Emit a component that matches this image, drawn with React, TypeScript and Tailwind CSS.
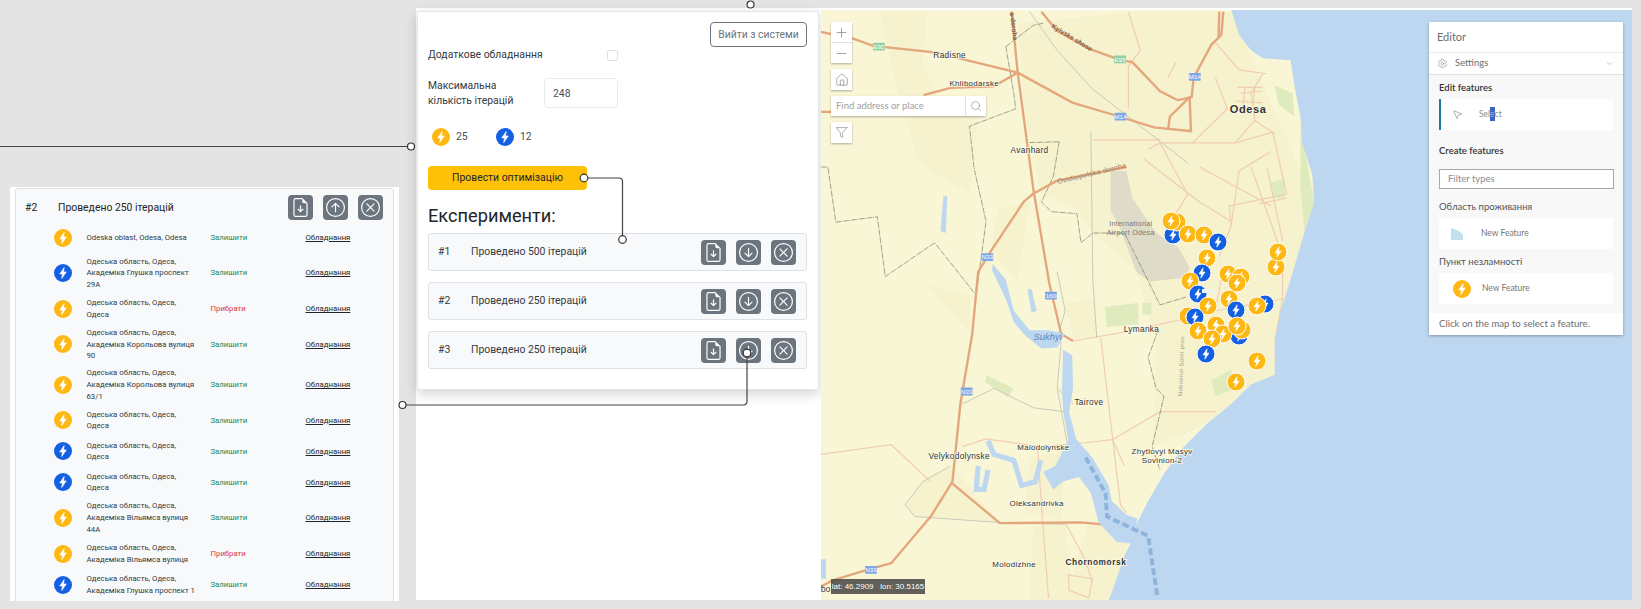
import { Home, Minus, MousePointer2, Plus, Search, Settings, ChevronDown } from "lucide-react";
import { BsArrowDownCircle, BsArrowUpCircle, BsFileEarmarkArrowDown, BsXCircle } from "react-icons/bs";
import { LuFilter } from "react-icons/lu";

const YELLOW = "#fdb813";
const BLUE = "#1460e2";
const BOLT = "M13.6 4.6 L7.6 13.3 H11.2 L10.3 19.4 L16.4 10.6 H12.7 Z";

type Kind = "y" | "b";

const points: { kind: Kind; lines: string[]; remove?: boolean }[] = [
  { kind: "y", lines: ["Odeska oblast, Odesa, Odesa"] },
  { kind: "b", lines: ["Одеська область, Одеса,", "Академіка Глушка проспект", "29А"] },
  { kind: "y", lines: ["Одеська область, Одеса,", "Одеса"], remove: true },
  { kind: "y", lines: ["Одеська область, Одеса,", "Академіка Корольова вулиця", "90"] },
  { kind: "y", lines: ["Одеська область, Одеса,", "Академіка Корольова вулиця", "63/1"] },
  { kind: "y", lines: ["Одеська область, Одеса,", "Одеса"] },
  { kind: "b", lines: ["Одеська область, Одеса,", "Одеса"] },
  { kind: "b", lines: ["Одеська область, Одеса,", "Одеса"] },
  { kind: "y", lines: ["Одеська область, Одеса,", "Академіка Вільямса вулиця", "44А"] },
  { kind: "y", lines: ["Одеська область, Одеса,", "Академіка Вільямса вулиця"], remove: true },
  { kind: "b", lines: ["Одеська область, Одеса,", "Академіка Глушка проспект 1"] },
];

const experiments = [
  { id: 1, text: "Проведено 500 ітерацій" },
  { id: 2, text: "Проведено 250 ітерацій" },
  { id: 3, text: "Проведено 250 ітерацій" },
];

// marker positions, page px, back to front
const markers: [Kind, number, number][] = [
  ["b", 1173, 235], ["y", 1177, 222], ["y", 1171, 221], ["y", 1188, 234], ["y", 1204, 235],
  ["b", 1218, 242], ["y", 1207, 258], ["b", 1202, 273], ["y", 1190, 281], ["y", 1228, 274],
  ["y", 1241, 277], ["y", 1237, 283], ["y", 1276, 267], ["y", 1278, 252], ["b", 1198, 294],
  ["y", 1208, 306], ["y", 1229, 299], ["b", 1236, 310], ["b", 1265, 304], ["y", 1257, 306],
  ["y", 1188, 316], ["b", 1195, 317], ["b", 1239, 336], ["y", 1216, 325], ["y", 1223, 334],
  ["y", 1242, 330], ["y", 1237, 326], ["y", 1198, 331], ["y", 1212, 339], ["b", 1206, 354],
  ["y", 1257, 361], ["y", 1236, 382],
];

const mainRoads = [
  "M0,82 L80,98 L135,118 L290,135 L500,187 L640,265 L750,298 L845,328 L940,338",
  "M0,288 L28,288",
  "M262,245 L330,226 L440,222 L500,187",
  "M485,30 L500,187 L540,490 L580,730 L610,860 L640,878",
  "M560,30 L600,80 L680,125 L760,155 L790,160 L860,235 L905,258 L940,250 L945,200 L990,115 L1015,90 L1020,30",
  "M1010,30 L1008,95",
  "M880,335 L885,300 L935,250 L938,338",
  "M775,430 L600,465 L540,498 L515,520 L430,650 L400,700 L385,860 L355,1040 L335,1240 L280,1330 L180,1450 L110,1470 L30,1495 L0,1512",
  "M335,1245 L455,1347 L660,1345 L715,1350",
];

const minorRoads = [
  "M640,878 L770,855 L925,820 L1000,800 L1170,770 L1170,700",
  "M360,1150 L420,1130 L560,1150 L670,1140 L740,1132",
  "M710,870 L760,1300 L775,1320",
  "M550,1150 L560,1300 L578,1540",
  "M620,1345 L670,1440 L690,1500",
  "M628,1480 L688,1490 L680,1540 L630,1520 Z",
  "M830,385 L860,368 L1050,368 L1145,340 L1180,500 L1035,530 L1040,580",
  "M860,368 L930,500 L900,550",
  "M1090,430 L1160,630",
  "M1140,390 L1060,440 L1040,580 L1010,660",
  "M1050,368 L1100,310 L1090,240 L1120,190",
  "M1000,110 L1060,180 L1130,190",
  "M1030,280 L940,370",
  "M820,410 L960,520 L1040,570",
  "M1180,510 L1110,525",
  "M780,30 L810,130 L780,170 L780,280",
  "M690,360 L860,360",
  "M1000,800 L1020,690",
  "M1170,770 L1150,880",
  "M770,1200 L740,1132 L860,1060 L1000,1060",
  "M0,1170 L180,1145 L280,1240",
  "M640,1040 L600,1000",
  "M1060,240 L1120,235 M1050,260 L1120,265 M1100,310 L1150,345 M960,430 L1140,530",
  "M1055,225 L1120,225 M1075,225 L1070,270 M1100,225 L1095,270 M900,160 L880,200 M1000,200 L1030,280 M1130,430 L1170,620",
];

const rail = [
  "M530,30 L600,130 L690,230 L830,340 L930,420",
  "M685,340 L690,720 L700,870",
  "M600,870 L620,800 L600,700",
  "M610,880 L600,1000 L625,1140",
  "M360,1040 L440,1000 L540,1050 L620,1060",
  "M215,1300 L260,1240 L330,1200 M215,1300 L240,1330 L450,1345 L620,1350",
];

const borders = [
  "M470,120 L540,65 L565,60 M470,120 L490,240 L495,280 L378,325 L390,435 L420,570 L395,760 L390,800",
  "M3,430 L20,430 L40,572 L145,558 L165,712 L290,625 L395,760",
  "M605,365 L590,455 L560,520 L585,545 L650,550 L660,625 L690,600 L770,600 L860,785 L925,765",
  "M530,367 L605,365",
  "M855,850 L830,920 L850,1000 L870,1020 L840,1150 L860,1210",
];

function BoltPath() {
  return <path d={BOLT} fill="#fff" stroke="#fff" strokeWidth={0.8} strokeLinejoin="round" />;
}

function PointIcon({ kind }: { kind: Kind }) {
  return (
    <svg viewBox="0 0 24 24" className="h-[18px] w-[18px] shrink-0">
      <circle cx={12} cy={12} r={12} fill={kind === "y" ? YELLOW : BLUE} />
      <BoltPath />
    </svg>
  );
}

function ActionButtons({ up }: { up?: boolean }) {
  return (
    <div className="flex gap-[10px]">
      <button className="flex h-[25px] w-[25px] items-center justify-center rounded-[4px] bg-[#6c757d] text-white">
        <BsFileEarmarkArrowDown size={19} />
      </button>
      <button className="flex h-[25px] w-[25px] items-center justify-center rounded-[4px] bg-[#6c757d] text-white">
        {up ? <BsArrowUpCircle size={19} /> : <BsArrowDownCircle size={19} />}
      </button>
      <button className="flex h-[25px] w-[25px] items-center justify-center rounded-[4px] bg-[#6c757d] text-white">
        <BsXCircle size={19} />
      </button>
    </div>
  );
}

function ResultFrame() {
  return (
    <div className="absolute left-[10px] top-[187px] h-[414px] w-[389px] overflow-hidden bg-white px-[5px] pt-px">
      <div className="h-[440px] rounded-[3px] border border-[#dee2e6] bg-[#f8f9fa]">
        <div className="flex items-center pl-[9px] pr-[10px] pt-[6px] text-[10.4px] text-[#212529]">
          <span className="w-[33px]">#2</span>
          <span>Проведено 250 ітерацій</span>
          <div className="ml-auto">
            <ActionButtons up />
          </div>
        </div>
        <div className="mt-[2px] pl-[38px]">
          {points.map((p, i) => (
            <div key={i} className="flex min-h-[31px] items-center py-[2.6px] text-[7.75px] leading-[11.7px]">
              <PointIcon kind={p.kind} />
              <div className="ml-[14.5px] w-[124px] text-[#343a40]">
                {p.lines.map((line) => (
                  <div key={line}>{line}</div>
                ))}
              </div>
              <span className={`w-[95px] ${p.remove ? "text-[#dc3545]" : "text-[#198754]"}`}>
                {p.remove ? "Прибрати" : "Залишити"}
              </span>
              <span className="text-[#212529] underline">Обладнання</span>
            </div>
          ))}
        </div>
      </div>
    </div>
  );
}

function ConfigPanel() {
  return (
    <div className="mt-[3px] ml-px mr-[2px] h-[379px] w-[402px] shrink-0 border border-[#e6e6e6] bg-white pl-[10px] pr-[11px] pt-[10px] text-[10.4px] text-[#343a40] shadow-[0_4px_12px_rgba(0,0,0,0.18)]">
      <div className="flex justify-end">
        <button className="h-[25px] w-[97px] rounded-[4px] border border-[#6c757d] text-[#6c757d]">
          Вийти з системи
        </button>
      </div>
      <div className="mt-px flex h-[14px] w-[190px] items-center justify-between">
        <span>Додаткове обладнання</span>
        <span className="h-[11px] w-[11px] rounded-[2px] border border-[#dee2e6] bg-white" />
      </div>
      <div className="mt-[16px] flex w-[190px] items-center justify-between leading-[15px]">
        <span>
          Максимальна
          <br />
          кількість ітерацій
        </span>
        <div className="flex h-[30px] w-[74px] items-center rounded-[4px] border border-[#e9ecef] bg-white pl-[8px] text-[#495057]">
          248
        </div>
      </div>
      <div className="mt-[20px] flex h-[18px] items-center pl-[4px] text-[#495057]">
        <PointIcon kind="y" />
        <span className="ml-[6px] w-[40px]">25</span>
        <PointIcon kind="b" />
        <span className="ml-[6px]">12</span>
      </div>
      <button className="mt-[20px] h-[24px] w-[159px] rounded-[4px] bg-[#ffc107] text-[#212529]">
        Провести оптимізацію
      </button>
      <h2 className="mt-[15px] text-[18.2px] leading-[22px] text-[#212529]">Експерименти:</h2>
      <div className="mt-[6px] flex flex-col gap-[11px]">
        {experiments.map((e) => (
          <div
            key={e.id}
            className="flex h-[38px] items-center rounded-[3px] border border-[#dee2e6] bg-[#f8f9fa] pl-[9px] pr-[10px]"
          >
            <span className="w-[33px]">#{e.id}</span>
            <span>{e.text}</span>
            <div className="ml-auto">
              <ActionButtons />
            </div>
          </div>
        ))}
      </div>
    </div>
  );
}

function Label({ x, y, text, bold, size = 20 }: { x: number; y: number; text: string; bold?: boolean; size?: number }) {
  return (
    <text
      x={x}
      y={y}
      textAnchor="middle"
      fontSize={size}
      fontWeight={bold ? 700 : 400}
      letterSpacing={bold ? 1.5 : 0.8}
      fill="#333"
      stroke="#fbf9e4"
      strokeWidth={4}
      paintOrder="stroke"
    >
      {text}
    </text>
  );
}

function Shield({ x, y, text, green }: { x: number; y: number; text: string; green?: boolean }) {
  return (
    <g>
      <rect x={x - 15} y={y - 10} width={30} height={20} rx={2} fill={green ? "#8fd0a0" : "#7fa6e6"} />
      <text x={x} y={y + 6} textAnchor="middle" fontSize={16} fill="#fff">
        {text}
      </text>
    </g>
  );
}

function MapDrawing() {
  return (
    <svg viewBox="0 0 811 590" className="absolute inset-0 h-full w-full font-['Liberation_Sans',sans-serif]">
      <rect width={811} height={590} fill="#f9f6d6" />
      <g transform="translate(-1 -10) scale(0.3954 0.3884)">
        {/* farmland and urban tint */}
        <g fill="#f5f2cd">
          <path d="M150,30 L270,30 L260,160 L310,280 L400,300 L380,500 L250,420 L200,250 Z" />
          <path d="M500,60 L800,30 L1040,30 L1250,520 L1150,965 L960,1100 L840,1150 L850,880 L800,700 L690,600 L650,540 L560,500 L520,300 Z" />
          <path d="M450,540 L530,520 L500,720 L430,650 Z" />
          <path d="M215,1300 L260,1240 L335,1200 L450,1345 L240,1330 Z" />
          <path d="M530,1180 L620,1160 L610,1340 L520,1320 Z" />
          <path d="M540,1340 L620,1350 L640,1545 L530,1545 Z" />
          <path d="M680,1340 L800,1350 L730,1545 L620,1545 Z" />
          <path d="M620,780 L700,770 L700,870 L640,870 Z" />
          <path d="M270,730 L380,760 L380,860 Z" />
        </g>
        <g fill="#dfebbd">
          <path d="M720,790 L805,780 L805,835 L725,842 Z" />
          <path d="M815,780 L838,780 L838,810 L815,810 Z" />
          <path d="M420,965 L490,1000 L475,1022 L418,985 Z" />
          <path d="M990,980 L1040,950 L1050,1000 L1000,1020 Z" />
          <path d="M1140,470 L1175,460 L1175,510 L1145,510 Z" />
          <path d="M1215,320 L1250,520 L1225,600 L1215,480 Z" />
          <path d="M1150,220 L1195,240 L1200,300 L1160,270 Z" />
        </g>
        <path
          d="M735,440 L775,440 L790,510 L850,600 L905,635 L935,690 L920,715 L835,725 L800,700 L760,590 L735,540 Z"
          fill="#dedbc8"
        />
        {minorRoads.map((d) => (
          <path key={d} d={d} fill="none" stroke="#f0cdb3" strokeWidth={3} />
        ))}
        {rail.map((d) => (
          <path key={d} d={d} fill="none" stroke="#c9c9ba" strokeWidth={2.5} />
        ))}
        {borders.map((d) => (
          <path key={d} d={d} fill="none" stroke="#6b6b60" strokeWidth={1.6} strokeDasharray="14 2 2 2" />
        ))}
        {mainRoads.map((d) => (
          <path key={d} d={d} fill="none" stroke="#e4a67c" strokeWidth={6} strokeLinejoin="round" />
        ))}
        {/* sea and limans */}
        <g fill="#bdd7f1">
          <path d="M1040,25 L1060,90 L1090,130 L1120,150 L1190,155 L1200,220 L1215,300 L1220,370 L1245,450 L1250,520 L1225,600 L1210,650 L1190,720 L1165,800 L1150,880 L1150,965 L1090,990 L1040,1040 L980,1090 L920,1150 L870,1220 L830,1290 L800,1350 L790,1390 L770,1430 L740,1520 L730,1545 L2060,1545 L2060,25 Z" />
          <path d="M437,680 L470,720 L490,800 L530,850 L580,850 L620,860 L600,895 L560,897 L520,865 L490,830 L470,770 L435,695 Z" />
          <path d="M615,900 L638,915 L640,1000 L630,1060 L648,1130 L690,1180 L730,1250 L738,1290 L775,1325 L802,1335 L792,1400 L750,1395 L705,1345 L685,1270 L655,1228 L615,1240 L590,1260 L565,1215 L595,1200 L628,1135 L615,1060 L612,1000 Z" />
          <path d="M312,505 L322,505 L318,600 L305,595 Z" />
          <path d="M525,745 L535,745 L548,800 L535,805 Z" />
          <path d="M0,1440 L15,1440 L15,1490 L0,1490 Z" />
        </g>
        <path
          d="M425,1135 L440,1170 L490,1185 L510,1250 L545,1240 L558,1185 M400,1200 L395,1260 L415,1260 L425,1210"
          fill="none"
          stroke="#bdd7f1"
          strokeWidth={13}
        />
        <path
          d="M672,1178 L722,1270 L726,1330 L830,1380 L854,1540"
          fill="none"
          stroke="#8fb4dc"
          strokeWidth={10}
          strokeDasharray="18 8"
        />
        <Shield x={149} y={120} text="E95" green />
        <Shield x={759} y={153} text="E95" green />
        <Shield x={948} y={198} text="M14" />
        <Shield x={760} y={300} text="M14" />
        <Shield x={423} y={662} text="N33" />
        <Shield x={584} y={761} text="T1600" />
        <Shield x={371} y={1008} text="N33" />
        <Shield x={129} y={1467} text="N33" />
        <Label x={328} y={149} text="Radisne" size={21} />
        <Label x={390} y={222} text="Khlibodarske" />
        <Label x={530} y={394} text="Avanhard" size={21} />
        <Label x={1083} y={292} text="Odesa" bold size={28} />
        <Label x={813} y={854} text="Lymanka" size={21} />
        <Label x={680} y={1043} text="Tairove" size={21} />
        <Label x={352} y={1182} text="Velykodolynske" size={21} />
        <Label x={565} y={1159} text="Malodolynske" />
        <Label x={865} y={1169} text="Zhytlovyi Masyv" />
        <Label x={865} y={1192} text="Sovinion-2" />
        <Label x={548} y={1303} text="Oleksandrivka" />
        <Label x={491} y={1461} text="Molodizhne" />
        <Label x={698} y={1454} text="Chornomorsk" bold size={21} />
        <text x={786} y={583} textAnchor="middle" fontSize={18} fill="#777" letterSpacing={0.8}>
          International
        </text>
        <text x={786} y={605} textAnchor="middle" fontSize={18} fill="#777" letterSpacing={0.8}>
          Airport Odesa
        </text>
        <text x={576} y={875} textAnchor="middle" fontSize={24} fontStyle="italic" fill="#5f86b8">
          Sukhyi
        </text>
        <text x={0} y={0} transform="translate(602 474) rotate(-14)" fontSize={18} fill="#9a7b66" letterSpacing={0.8}>
          Ovidiopolska doroha
        </text>
        <text x={0} y={0} transform="translate(584 70) rotate(32)" fontSize={17} fill="#7d5c44" fontWeight={700}>
          Kyivske shose
        </text>
        <text x={0} y={0} transform="translate(480 32) rotate(83)" fontSize={17} fill="#7d5c44" fontWeight={700}>
          a-doroha
        </text>
        <text x={0} y={0} transform="translate(916 1020) rotate(-88)" fontSize={15} fill="#a89a88" letterSpacing={1}>
          Nobosnoi Sotni prov.
        </text>
        <text x={2} y={1524} fontSize={22} fill="#444">
          bo
        </text>
      </g>
      {markers.map(([kind, x, y], i) => (
        <g key={i} transform={`translate(${x - 821} ${y - 10})`}>
          <circle r={9} fill={kind === "y" ? YELLOW : BLUE} stroke="#fff" strokeWidth={1} />
          <g transform="translate(-8.4 -8.4) scale(0.7)">
            <BoltPath />
          </g>
        </g>
      ))}
      <rect x={381} y={279} width={12} height={4} fill="#e8f6f6" />
    </svg>
  );
}

function MapWidgets() {
  return (
    <div className="absolute left-[10px] top-[12px] flex flex-col items-start gap-[6px] text-[#6e6e6e]">
      <div className="w-[21px] bg-white shadow-[0_1px_2px_rgba(0,0,0,0.3)]">
        <div className="flex h-[21px] items-center justify-center border-b border-[#e0e0e0]">
          <Plus size={15} strokeWidth={1} />
        </div>
        <div className="flex h-[20px] items-center justify-center">
          <Minus size={15} strokeWidth={1} />
        </div>
      </div>
      <div className="flex h-[21px] w-[21px] items-center justify-center bg-white shadow-[0_1px_2px_rgba(0,0,0,0.3)]">
        <Home size={14} strokeWidth={1} />
      </div>
      <div className="flex h-[20px] w-[155px] items-center bg-white text-[9.5px] text-[#a0a0a0] shadow-[0_1px_2px_rgba(0,0,0,0.3)] font-['Lato',sans-serif]">
        <span className="w-[134px] pl-[5px]">Find address or place</span>
        <span className="flex h-full flex-1 items-center justify-center border-l border-[#e0e0e0] text-[#6e6e6e]">
          <Search size={12} strokeWidth={1} />
        </span>
      </div>
      <div className="flex h-[21px] w-[21px] items-center justify-center bg-white shadow-[0_1px_2px_rgba(0,0,0,0.3)]">
        <LuFilter size={13} strokeWidth={1} />
      </div>
    </div>
  );
}

function EditorPanel() {
  return (
    <div className="absolute right-[9px] top-[12px] flex h-[313px] w-[194px] flex-col bg-[#f8f8f8] text-[#4c4c4c] shadow-[0_1px_3px_rgba(0,0,0,0.3)] font-['Lato',sans-serif]">
      <div className="flex h-[31px] items-center border-b border-[#e9e9e9] bg-white pl-[8px] text-[11px] text-[#6e6e6e]">
        Editor
      </div>
      <div className="flex h-[22px] items-center border-b border-[#e0e0e0] bg-white pl-[8px] pr-[9px] text-[9.5px] text-[#6e6e6e]">
        <Settings size={11} strokeWidth={1} />
        <span className="ml-[7px]">Settings</span>
        <ChevronDown size={9} strokeWidth={1} className="ml-auto" />
      </div>
      <div className="flex flex-1 flex-col px-[10px] text-[9.5px]">
        <div className="mt-[7px] h-[12px] font-semibold leading-[12px] text-[#333]">Edit features</div>
        <div className="mt-[5px] flex h-[31px] items-center border-l-2 border-[#1f77a8] bg-white text-[8.5px] text-[#8a8a8a]">
          <MousePointer2 size={11} strokeWidth={1} className="ml-[11px] text-[#555]" />
          <span className="ml-[16px]">
            Sel<span className="bg-[#3d63c4] py-[2px] text-[#9db4e6]">e</span>ct
          </span>
        </div>
        <div className="mt-[15px] h-[12px] font-semibold leading-[12px] text-[#333]">Create features</div>
        <div className="mt-[12px] flex h-[20px] w-[175px] items-center border border-[#a8a8a8] bg-white pl-[8px] text-[#8c8c8c]">
          Filter types
        </div>
        <div className="mt-[12px] h-[12px] leading-[12px] text-[#555]">Область проживання</div>
        <div className="mt-[5px] flex h-[31px] items-center bg-white text-[8.5px] text-[#777]">
          <svg viewBox="0 0 12 12" className="ml-[12px] h-[12px] w-[12px]">
            <path d="M0 0 L8 3 L12 7 V12 H0 Z" fill="#bfe0ec" />
          </svg>
          <span className="ml-[18px]">New Feature</span>
        </div>
        <div className="mt-[7px] h-[12px] leading-[12px] text-[#555]">Пункт незламності</div>
        <div className="mt-[5px] flex h-[31px] items-center bg-white text-[8.5px] text-[#777]">
          <div className="ml-[14px]">
            <PointIcon kind="y" />
          </div>
          <span className="ml-[11px]">New Feature</span>
        </div>
      </div>
      <div className="flex h-[22px] items-center bg-white pl-[10px] text-[9.6px] text-[#6e6e6e]">
        Click on the map to select a feature.
      </div>
    </div>
  );
}

function MapView() {
  return (
    <div className="relative mt-[2px] h-[590px] flex-1 overflow-hidden">
      <MapDrawing />
      <MapWidgets />
      <EditorPanel />
      <div className="absolute left-[10px] top-[569px] flex h-[15px] w-[94px] items-center justify-center whitespace-nowrap bg-[#4f4f4a]/90 text-[8px] text-white font-['Liberation_Sans',sans-serif]">
        lat: 46.2909&nbsp;&nbsp;&nbsp;lon: 30.5165
      </div>
    </div>
  );
}

function Connectors() {
  return (
    <svg viewBox="0 0 1641 609" className="pointer-events-none absolute inset-0 h-full w-full">
      <g fill="none" stroke="#444" strokeWidth={1.2}>
        <path d="M0 146.5 H408" />
        <path d="M588 178 H619 Q622.5 178 622.5 181.5 V235" />
        <path d="M747 357 V401 Q747 405 743 405 H406" />
      </g>
      <g fill="#fff" stroke="#333" strokeWidth={1.2}>
        <circle cx={411} cy={146.5} r={3.5} />
        <circle cx={750.5} cy={4.5} r={3.5} />
        <circle cx={584} cy={178} r={3.8} />
        <circle cx={622.5} cy={239.5} r={3.8} />
        <circle cx={747} cy={353} r={3.8} />
        <circle cx={402.5} cy={405} r={3.5} />
      </g>
    </svg>
  );
}

export default function App() {
  return (
    <div className="relative h-[609px] w-[1641px] overflow-hidden bg-[#e4e4e4] font-['Roboto',sans-serif]">
      <ResultFrame />
      <div className="absolute left-[416px] top-[8px] flex h-[592px] w-[1216px] items-start bg-white">
        <ConfigPanel />
        <MapView />
      </div>
      <Connectors />
    </div>
  );
}
